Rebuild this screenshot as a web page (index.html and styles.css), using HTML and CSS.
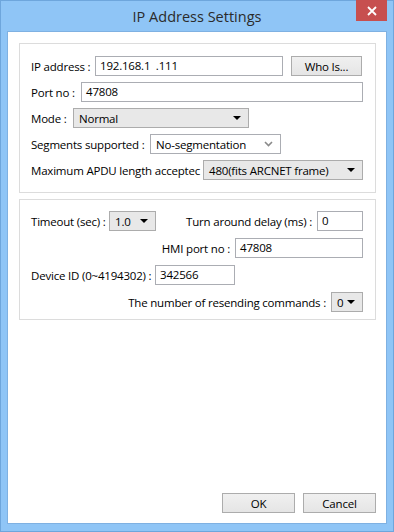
FILE: index.html
```html
<!doctype html>
<html>
<head>
  <meta charset="utf-8">
  <title>IP Address Settings</title>
  <link rel="stylesheet" href="styles.css">
</head>
<body>
<div class="window">
  <div class="titlebar">
    <span class="title">IP Address Settings</span>
    <div class="close-btn">
      <svg width="10" height="10" viewBox="0 0 10 10"><path d="M1 1L9 9M9 1L1 9" stroke="#fff" stroke-width="1.8"/></svg>
    </div>
  </div>

  <div class="client">
    <div class="group group-ip">
      <div class="row">
        <label class="l-ip">IP address :</label>
        <div class="textbox w-ip">192.168.1&nbsp;&nbsp;.111</div>
        <div class="button btn-whois">Who Is...</div>
      </div>
      <div class="row">
        <label class="l-port">Port no :</label>
        <div class="textbox w-port">47808</div>
      </div>
      <div class="row">
        <label class="l-mode">Mode :</label>
        <div class="combo w-mode"><span>Normal</span><i class="arrow"></i></div>
      </div>
      <div class="row">
        <label class="l-seg">Segments supported :</label>
        <div class="combo combo-white w-seg"><span>No-segmentation</span>
          <svg class="chevron" width="9" height="6" viewBox="0 0 9 6"><path d="M1 1L4.5 4.5L8 1" stroke="#8a8a8a" stroke-width="1.6" fill="none"/></svg>
        </div>
      </div>
      <div class="row">
        <label class="l-apdu">Maximum APDU length acceptec</label>
        <div class="combo w-apdu"><span>480(fits ARCNET frame)</span><i class="arrow"></i></div>
      </div>
    </div>

    <div class="group group-dev">
      <div class="row">
        <label class="l-timeout">Timeout (sec) :</label>
        <div class="combo w-timeout"><span>1.0</span><i class="arrow"></i></div>
        <label class="push">Turn around delay (ms) :</label>
        <div class="textbox w-delay">0</div>
      </div>
      <div class="row end">
        <label>HMI port no :</label>
        <div class="textbox w-hmi">47808</div>
      </div>
      <div class="row">
        <label class="l-dev">Device ID (0~4194302) :</label>
        <div class="textbox w-dev">342566</div>
      </div>
      <div class="row end">
        <label>The number of resending commands :</label>
        <div class="combo w-resend"><span>0</span><i class="arrow"></i></div>
      </div>
    </div>

    <div class="footer">
      <div class="button btn-dlg">OK</div>
      <div class="button btn-dlg">Cancel</div>
    </div>
  </div>
</div>
</body>
</html>
```

FILE: styles.css
```css
html, body {
  margin: 0;
  padding: 0;
}

body {
  font-family: "Open Sans", "Noto Sans", sans-serif;
  font-size: 11.5px;
  letter-spacing: -0.2px;
  color: #000;
}

.window {
  width: 394px;
  height: 532px;
  box-sizing: border-box;
  background-color: #8fc5f6;
  border: 1px solid #6ea6dc;
  display: flex;
  flex-direction: column;
}

.titlebar {
  height: 30px;
  display: flex;
  justify-content: center;
  align-items: center;
  position: relative;
}

.title {
  font-size: 14.5px;
  letter-spacing: 0;
  color: #2b2b2b;
  margin-top: 1px;
}

.close-btn {
  position: absolute;
  top: -1px;
  right: 6px;
  width: 31px;
  height: 21px;
  background-color: #c74f4f;
  display: flex;
  justify-content: center;
  align-items: center;
}

.client {
  flex: 1;
  margin: 0 6px 7px 6px;
  background-color: #fff;
  border: 1px solid #7fb1e2;
  padding: 11px 10px 10px 11px;
  display: flex;
  flex-direction: column;
}

.group {
  border: 1px solid #dcdcdc;
  padding: 12px 12px 10px 11px;
  display: flex;
  flex-direction: column;
  gap: 6px;
}

.group-ip {
  height: 150px;
  box-sizing: border-box;
  padding-top: 12px;
}

.group-dev {
  margin-top: 6px;
  height: 121px;
  box-sizing: border-box;
  padding-top: 11px;
  gap: 7px;
}

.row {
  display: flex;
  align-items: center;
  height: 20px;
}

.row.end {
  justify-content: flex-end;
}

label {
  white-space: nowrap;
  flex-shrink: 0;
  margin-right: 5px;
}

label.push {
  margin-left: auto;
}

.l-ip { width: 59px; }
.l-port { width: 45px; }
.l-mode { width: 37px; }
.l-seg { width: 114px; }
.l-apdu { width: 167px; }
.l-timeout { width: 73px; }
.l-dev { width: 119px; }

.textbox {
  box-sizing: border-box;
  height: 20px;
  border: 1px solid #abadb3;
  background-color: #fff;
  padding: 0 4px;
  line-height: 18px;
}

.combo {
  box-sizing: border-box;
  height: 20px;
  border: 1px solid #acacac;
  background-color: #e8e8e8;
  padding: 0 7px 0 5px;
  display: flex;
  align-items: center;
  justify-content: space-between;
}

.combo-white {
  background-color: #fff;
  border-color: #abadb3;
}

.arrow {
  width: 0;
  height: 0;
  border-left: 4px solid transparent;
  border-right: 4px solid transparent;
  border-top: 4px solid #000;
}

.button {
  box-sizing: border-box;
  height: 20px;
  border: 1px solid #acacac;
  background: linear-gradient(#f0f0f0, #e5e5e5);
  display: flex;
  justify-content: center;
  align-items: center;
}

.w-ip { width: 188px; }
.btn-whois { width: 71px; margin-left: 8px; }
.w-port { width: 282px; }
.w-mode { width: 176px; }
.w-seg { width: 131px; }
.w-apdu { width: 160px; }
.w-timeout { width: 47px; }
.w-delay { width: 46px; }
.w-hmi { width: 128px; }
.w-dev { width: 80px; }
.w-resend { width: 32px; }

.footer {
  margin-top: auto;
  display: flex;
  justify-content: flex-end;
  gap: 8px;
  padding-right: 0;
}

.btn-dlg {
  width: 73px;
  height: 20px;
}
```
